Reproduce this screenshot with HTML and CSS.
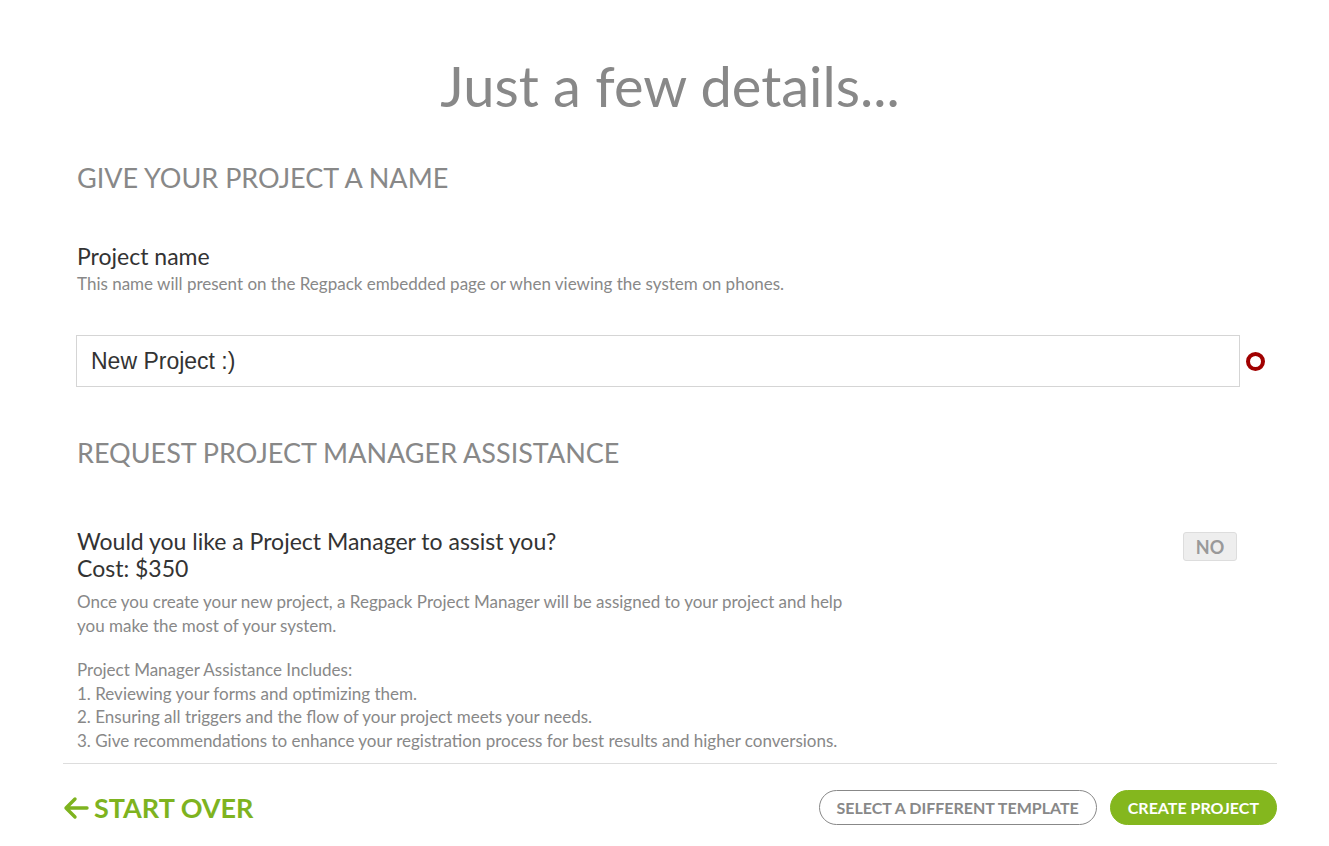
FILE: index.html
```html
<!DOCTYPE html>
<html lang="en">
<head>
    <meta charset="UTF-8">
    <meta name="viewport" content="width=device-width, initial-scale=1.0">
    <title>Just a few details</title>
    <link rel="stylesheet" href="styles.css">
</head>
<body>
    <div class="page">
        <h1 class="title">Just a few details...</h1>

        <div class="form">
            <h2 class="sectionTitle">GIVE YOUR PROJECT A NAME</h2>

            <div class="field">
                <div class="label">Project name</div>
                <div class="hint">This name will present on the Regpack embedded page or when viewing the system on phones.</div>
            </div>

            <div class="inputRow">
                <input class="textInput" type="text" value="New Project :)">
                <span class="required"></span>
            </div>

            <h2 class="sectionTitle second">REQUEST PROJECT MANAGER ASSISTANCE</h2>

            <div class="assistRow">
                <div class="assistText">
                    <div class="label">Would you like a Project Manager to assist you?<br>Cost: $350</div>
                    <p class="hint">Once you create your new project, a Regpack Project Manager will be assigned to your project and help you make the most of your system.</p>
                    <p class="hint">Project Manager Assistance Includes:<br>
                        1. Reviewing your forms and optimizing them.<br>
                        2. Ensuring all triggers and the flow of your project meets your needs.<br>
                        3. Give recommendations to enhance your registration process for best results and higher conversions.</p>
                </div>
                <button class="toggle">NO</button>
            </div>
        </div>

        <!-- bottom navigation -->
        <div class="footer">
            <a class="startOver" href="#">
                <svg width="26" height="24" viewBox="0 0 26 24"><path d="M24 12H3M12 3L3 12L12 21" fill="none" stroke="#7eb31f" stroke-width="3.4" stroke-linecap="round" stroke-linejoin="round"/></svg>
                START OVER
            </a>
            <div class="actions">
                <button class="btn outline">SELECT A DIFFERENT TEMPLATE</button>
                <button class="btn green">CREATE PROJECT</button>
            </div>
        </div>
    </div>
</body>
</html>
```

FILE: styles.css
```css
body {
    margin: 0;
    font-family: Lato, "Open Sans", sans-serif;
    background-color: #fff;
    color: #333;
}
.page {
    width: 1214px;
    margin-left: 63px;
}
.title {
    margin: 0;
    padding-top: 50px;
    font-size: 56px;
    line-height: 72px;
    font-weight: normal;
    color: #888;
    text-align: center;
}
.form {
    padding: 0 10px 0 14px;
}
.sectionTitle {
    margin: 40px 0 0 0;
    font-size: 27px;
    line-height: 31px;
    font-weight: normal;
    color: #888;
}
.sectionTitle.second {
    margin-top: 50px;
}
.field {
    margin-top: 50px;
}
.label {
    font-size: 23px;
    line-height: 26px;
    color: #333;
}
.hint {
    font-size: 17px;
    line-height: 24px;
    color: #888;
}
.field .hint {
    margin-top: 3px;
}
.inputRow {
    display: flex;
    align-items: center;
    margin-top: 39px;
}
.textInput {
    flex-shrink: 0;
    width: 1164px;
    height: 52px;
    box-sizing: border-box;
    margin-left: -1px;
    padding: 0 14px;
    border: 1px solid #d5d5d5;
    font-family: "Liberation Sans", Arial, sans-serif;
    font-size: 23px;
    color: #333;
    outline: none;
}
.required {
    flex-shrink: 0;
    width: 11px;
    height: 11px;
    margin-left: 6px;
    border: 4px solid #a00000;
    border-radius: 50%;
}
.assistRow {
    display: flex;
    justify-content: space-between;
    align-items: flex-start;
    margin-top: 60px;
}
.assistText {
    width: 790px;
}
.assistText .label {
    line-height: 27px;
}
.assistText p {
    margin: 8px 0 0 0;
}
.assistText p + p {
    margin-top: 20px;
    line-height: 23.5px;
}
.toggle {
    margin-top: 4px;
    margin-right: 30px;
    width: 54px;
    height: 29px;
    padding: 0;
    border: 1px solid #ddd;
    border-radius: 3px;
    background-color: #eee;
    font-family: Lato, sans-serif;
    font-size: 18px;
    font-weight: bold;
    color: #999;
}
.footer {
    display: flex;
    justify-content: space-between;
    align-items: center;
    margin-top: 11px;
    border-top: 1px solid #ddd;
    padding-top: 26px;
}
.startOver {
    display: flex;
    align-items: center;
    gap: 5px;
    font-size: 27px;
    font-weight: bold;
    color: #7eb31f;
    text-decoration: none;
}
.actions {
    display: flex;
    gap: 13px;
}
.btn {
    height: 35px;
    padding: 0 17px;
    border-radius: 18px;
    font-family: Lato, sans-serif;
    font-size: 16px;
    font-weight: bold;
    cursor: pointer;
}
.btn.outline {
    border: 1px solid #888;
    background-color: #fff;
    color: #888;
}
.btn.green {
    border: 1px solid #84b71e;
    background-color: #84b71e;
    color: #fff;
}
```
